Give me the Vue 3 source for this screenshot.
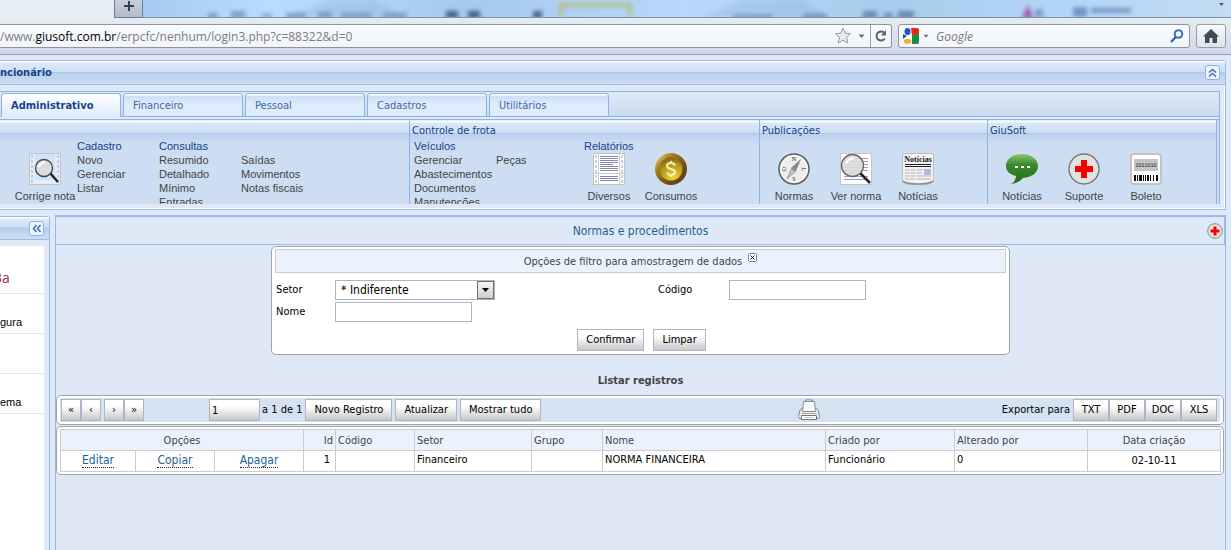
<script setup>
import { ref } from 'vue'

const tabs = ['Administrativo', 'Financeiro', 'Pessoal', 'Cadastros', 'Utilitários']
const active = ref('Administrativo')
const notas = [
  { head: 'Cadastro', items: ['Novo', 'Gerenciar', 'Listar'] },
  { head: 'Consultas', items: ['Resumido', 'Detalhado', 'Mínimo', 'Entradas'] },
  { head: '', items: ['Saídas', 'Movimentos', 'Notas fiscais'] },
]
const frota = [
  { head: 'Veículos', items: ['Gerenciar', 'Abastecimentos', 'Documentos', 'Manutenções'] },
  { head: '', items: ['Peças'] },
]
const cols = [75, 79, 89, 32, 79, 117, 71, 223, 129, 133, 133]
const exports = ['TXT', 'PDF', 'DOC', 'XLS']
const setor = ref('* Indiferente')
const nome = ref('')
const codigo = ref('')
const pagina = ref('1')
const perforations = [2, 7, 12, 17, 22, 27]
const bars = [[4, 2], [7, 1], [9, 3], [13, 1], [15, 1], [17, 2], [20, 1], [23, 1], [26, 2]]
</script>

<template>
  <div class="screen">
    <header class="browser">
      <div class="tabstrip">
        <div class="open-tab"></div>
        <button class="new-tab" aria-label="Nova aba">
          <svg width="12" height="12" viewBox="0 0 12 12"><path d="M6 1v10M1 6h10" stroke="#38424c" stroke-width="2" /></svg>
        </button>
        <div class="glass">
          <svg class="glass-art" height="17" width="1089" viewBox="0 0 1089 17" aria-hidden="true">
            <defs><filter id="soft"><feGaussianBlur stdDeviation="2" /></filter></defs>
            <g filter="url(#soft)">
              <path d="M140 17L190 0h40l35 17zM560 17L600 0h60l25 17z" fill="#8db0d6" opacity=".35" />
              <path d="M65 13h10v5H65zM88 11h14v7H88zM119 14h10v4h-10zM143 13h20v5h-20zM175 12h14v6h-14zM198 13h30v5h-30zM240 13h24v5h-24z" fill="#5c7fa9" opacity=".65" />
              <path d="M303 11h12v7h-12zM325 11h12v7h-12zM390 11h9v7h-9z" fill="#2f4767" opacity=".8" />
              <path d="M590 15h40v3h-40zM660 14h24v4h-24zM720 11h14v7h-14zM741 13h9v5h-9zM755 11h16v7h-16z" fill="#4d6c93" opacity=".7" />
              <path d="M418 17V5h69v12" fill="none" stroke="#b6bf8b" stroke-width="4" />
              <path d="M879 18l6-13 5 13z" fill="#9d57a4" />
              <path d="M892 9h8v9h-8z" fill="#6384c4" opacity=".7" />
              <path d="M930 7h14v10h-14zM948 8h40v5h-40z" fill="#4f74aa" opacity=".65" />
            </g>
          </svg>
          <svg class="tab-list" width="7" height="5" viewBox="0 0 7 5" aria-hidden="true"><path d="M1 1h5L3.500 4z" fill="#555f6a" /></svg>
        </div>
      </div>
      <div class="navbar">
        <div class="address">
          <span class="url">/www.<b>giusoft.com.br</b>/erpcfc/nenhum/login3.php?c=88322&amp;d=0</span>
          <button class="bare star" aria-label="Favoritos">
            <svg width="18" height="18" viewBox="0 0 18 18"><path d="M9 1.200l2.300 5 5.200.5-4 3.700 1.300 5.600L9 13.300 4.200 16l1.300-5.600-4-3.700 5.200-.5z" fill="#e9eaec" stroke="#96999e" /></svg>
            <svg width="7" height="5" viewBox="0 0 7 5"><path d="M.5.5h6L3.500 4z" fill="#6a6d72" /></svg>
          </button>
          <button class="bare reload" aria-label="Recarregar">
            <svg width="14" height="14" viewBox="0 0 14 14"><path d="M10.800 9.500A4.500 4.500 0 1 1 10 3.600" fill="none" stroke="#5e646b" stroke-width="2" /><path d="M12 1v5.500H6.800z" fill="#5e646b" /></svg>
          </button>
        </div>
        <div class="search">
          <svg width="16" height="16" viewBox="0 0 16 16" aria-hidden="true">
            <path d="M8 0h6a2 2 0 0 1 2 2v4L9 8z" fill="#e8261c" /><path d="M16 5v9a2 2 0 0 1-2 2H9V8z" fill="#12903b" /><path d="M0 6l6 2v7H0z" fill="#fff" />
            <ellipse cx="4.500" cy="3.500" rx="3" ry="3.500" fill="#1a56c4" /><path d="M0 6l4 2-4 3z" fill="#1a56c4" /><ellipse cx="4.500" cy="13.200" rx="3.700" ry="2.500" fill="#f2ae1c" />
          </svg>
          <svg width="6" height="5" viewBox="0 0 7 5" aria-hidden="true"><path d="M.5.5h6L3.500 4z" fill="#6a6d72" /></svg>
          <input type="text" placeholder="Google" aria-label="Pesquisar" />
          <svg width="14" height="14" viewBox="0 0 14 14" aria-hidden="true"><circle cx="8.500" cy="5" r="3.800" fill="none" stroke="#3275ae" stroke-width="2" /><path d="M5.800 8L1 13" stroke="#2f66a4" stroke-width="2.400" /></svg>
        </div>
        <button class="home" aria-label="Página inicial">
          <svg width="16" height="14" viewBox="0 0 16 14"><path d="M8 0l8 7.500h-2V14H9.500V9h-3v5H2V7.500H0z" fill="#424c57" /></svg>
        </button>
      </div>
    </header>

    <main class="page">
      <section class="menu">
        <div class="menu-head">
          <strong>ncionário</strong>
          <button class="tool" aria-label="Recolher menu">
            <svg width="9" height="9" viewBox="0 0 9 9"><path d="M1 4.500l3.500-3 3.500 3M1 8.500l3.500-3 3.500 3" fill="none" stroke="#3f74b5" stroke-width="1.600" /></svg>
          </button>
        </div>
        <div class="menu-box">
          <nav class="tabs">
            <button v-for="t in tabs" :key="t" class="tab" :class="{ on: t === active }" @click="active = t">{{ t }}</button>
          </nav>
          <div class="ribbon">
            <section class="group first">
              <h3></h3>
              <div class="row">
                <a href="#" class="tile">
                  <svg width="32" height="32" viewBox="0 0 32 32">
                    <rect x=".5" y=".5" width="31" height="31" fill="#e8edf4" stroke="#c3c3c3" /><rect x="6" y="1" width="20" height="26" fill="#cfe2fb" />
                    <path v-for="p in perforations" :key="p" :d="`M2 ${p}h2v3H2zM28 ${p}h2v3h-2z`" fill="#c4cbd4" />
                    <path d="M21 20l8 9" stroke="#222" stroke-width="2.500" /><circle cx="15" cy="15" r="8.500" fill="#dcdcdc" stroke="#444" stroke-width="1.300" /><path d="M10 14q1-4 6-5" fill="none" stroke="#fff" stroke-width="2" />
                  </svg><span>Corrige nota</span>
                </a>
                <div v-for="(c, i) in notas" :key="i" class="links">
                  <b>{{ c.head }}</b><a v-for="x in c.items" :key="x" href="#">{{ x }}</a>
                </div>
              </div>
            </section>
            <section class="group fleet">
              <h3>Controle de frota</h3>
              <div class="row">
                <div v-for="(c, i) in frota" :key="i" class="links">
                  <b>{{ c.head }}</b><a v-for="x in c.items" :key="x" href="#">{{ x }}</a>
                </div>
                <div class="reports">
                  <b>Relatórios</b>
                  <div class="tiles">
                    <a href="#" class="tile">
                      <svg width="32" height="32" viewBox="0 0 32 32">
                        <rect x=".5" y=".5" width="31" height="31" fill="#fff" stroke="#c3c3c3" /><path d="M5.500 1v30M26.500 1v30M1 20.500h30" stroke="#ccc" />
                        <path v-for="p in perforations" :key="p" :d="`M2 ${p}h2v3H2zM28 ${p}h2v3h-2z`" fill="#cfcfcf" />
                        <path d="M7 3.500h18M7 5.500h18M7 7.500h18M7 9.500h18M7 11.500h13M7 13.500h18M7 15.500h18M7 17.500h18M7 23.500h18M7 25.500h18M7 27.500h18" stroke="#8387b6" />
                      </svg><span>Diversos</span>
                    </a>
                    <a href="#" class="tile">
                      <svg width="32" height="32" viewBox="0 0 32 32">
                        <defs><radialGradient id="coin" cx=".6" cy=".85" r=".9"><stop offset="0" stop-color="#f0d92c" /><stop offset=".6" stop-color="#b39a20" /><stop offset="1" stop-color="#7c5a14" /></radialGradient>
                          <linearGradient id="rim" x1="0" y1="0" x2="1" y2="1"><stop offset="0" stop-color="#f3e58a" /><stop offset=".3" stop-color="#a4801c" /><stop offset=".7" stop-color="#6a4515" /></linearGradient></defs>
                        <circle cx="16" cy="16" r="16" fill="url(#rim)" /><circle cx="16" cy="16" r="11.500" fill="url(#coin)" />
                        <path d="M20 12.500Q19 10 16 10q-4 0-4 3 0 2 4 3t4 3q0 3-4 3-3 0-4-2.500M16 8v2M16 22v2" fill="none" stroke="#f8efbd" stroke-width="2" />
                      </svg><span>Consumos</span>
                    </a>
                  </div>
                </div>
              </div>
            </section>
            <section class="group">
              <h3>Publicações</h3>
              <div class="row icons">
                <a href="#" class="tile">
                  <svg width="32" height="32" viewBox="0 0 32 32">
                    <circle cx="16" cy="16" r="15" fill="#ededed" stroke="#5e5e5e" stroke-width="1.500" /><circle cx="16" cy="16" r="13" fill="none" stroke="#fff" />
                    <path d="M23 6L14 14l4 4z" fill="#888" /><path d="M9 26l5-12 4 4z" fill="#c4c4c4" stroke="#777" stroke-width=".6" /><circle cx="16" cy="16" r="2" fill="#8a8a8a" />
                    <text x="16" y="8" class="dial">N</text><text x="16" y="28" class="dial">S</text>
                    <text x="16" y="8" class="dial" transform="rotate(-90 16 16)">O</text><text x="16" y="8" class="dial" transform="rotate(90 16 16)">L</text>
                  </svg><span>Normas</span>
                </a>
                <a href="#" class="tile">
                  <svg width="32" height="32" viewBox="0 0 32 32">
                    <rect x=".5" y=".5" width="31" height="31" fill="#fff" stroke="#c6c6c6" /><path d="M4 5.500h24M4 8.500h24M4 11.500h24M4 14.500h24M4 17.500h24M4 20.500h18M4 23.500h24M4 26.500h24" stroke="#9a9bc2" />
                    <path d="M20 20l10 10" stroke="#222" stroke-width="2.600" /><circle cx="12.500" cy="12.500" r="11" fill="#dcdcdc" fill-opacity=".9" stroke="#666" stroke-width="1.300" /><path d="M6 11q1-5 8-6" fill="none" stroke="#fff" stroke-width="2" />
                  </svg><span>Ver norma</span>
                </a>
                <a href="#" class="tile">
                  <svg width="32" height="32" viewBox="0 0 32 32">
                    <path d="M.5.5h31v28q-2 3-7 3h-17q-5 0-7-3z" fill="#f2f2f2" stroke="#bdbdbd" /><path d="M1 28q3 3 15 3t15-3" fill="none" stroke="#888" stroke-width="1.500" />
                    <text x="16" y="9" class="paper">Notícias</text><path d="M3 11.500h26M3 13.500h26" stroke="#222" />
                    <path d="M3 17h17M3 20h17M3 23h26M3 26h26" stroke="#d2d2d2" stroke-width="2" /><path d="M8 15v13M14 15v13" stroke="#f2f2f2" /><rect x="22" y="16" width="7" height="6" fill="#afbde1" />
                  </svg><span>Notícias</span>
                </a>
              </div>
            </section>
            <section class="group last">
              <h3>GiuSoft</h3>
              <div class="row icons">
                <a href="#" class="tile">
                  <svg width="32" height="32" viewBox="0 0 32 32">
                    <defs><linearGradient id="talk" x1="0" y1="0" x2="0" y2="1"><stop offset="0" stop-color="#8cc56e" /><stop offset=".35" stop-color="#3c8a2c" /><stop offset="1" stop-color="#256a1a" /></linearGradient></defs>
                    <path d="M16 1c9 0 16 5 16 12 0 7-6 11-15 12q-4 5-12 6 5-3 5-8C3 21 0 18 0 13 0 6 7 1 16 1z" fill="url(#talk)" /><path d="M9 13h3v2H9zM15 13h3v2h-3zM21 13h3v2h-3z" fill="#fff" />
                  </svg><span>Notícias</span>
                </a>
                <a href="#" class="tile">
                  <svg width="32" height="32" viewBox="0 0 32 32"><circle cx="16" cy="16" r="15" fill="#e2e2e2" stroke="#777" stroke-width="1.400" /><path d="M13 7h6v6h6v6h-6v6h-6v-6H7v-6h6z" fill="#f80000" /></svg><span>Suporte</span>
                </a>
                <a href="#" class="tile">
                  <svg width="32" height="32" viewBox="0 0 32 32">
                    <rect x="1" y="1" width="30" height="30" rx="3" fill="#fff" stroke="#c4c4c4" stroke-width="2" /><rect x="4" y="6" width="24" height="12" fill="#c4c4c4" /><text x="16" y="14" class="digits">1011010</text>
                    <path v-for="b in bars" :key="b[0]" :d="`M${b[0]} 22h${b[1]}v6h-${b[1]}z`" fill="#111" />
                  </svg><span>Boleto</span>
                </a>
              </div>
            </section>
          </div>
        </div>
      </section>

      <div class="body">
        <aside class="side">
          <div class="side-head">
            <button class="tool" aria-label="Recolher painel">
              <svg width="9" height="9" viewBox="0 0 9 9"><path d="M4.500 1l-3 3.500 3 3.500M8.500 1l-3 3.500 3 3.500" fill="none" stroke="#3f74b5" stroke-width="1.600" /></svg>
            </button>
          </div>
          <ul>
            <li class="brand"><span>3a</span></li><li>gura</li><li></li><li>ema</li>
          </ul>
        </aside>

        <section class="content">
          <div class="title">
            <h1>Normas e procedimentos</h1>
            <button class="bare help" aria-label="Suporte">
              <svg width="16" height="16" viewBox="0 0 16 16"><circle cx="8" cy="8" r="7.300" fill="#e4e4e4" stroke="#8b8b8b" /><path d="M6.500 3.500h3v3h3v3h-3v3h-3v-3h-3v-3h3z" fill="#f80000" /></svg>
            </button>
          </div>

          <form class="filter" @submit.prevent>
            <div class="filter-title">
              <span>Opções de filtro para amostragem de dados</span>
              <button type="button" class="bare close" aria-label="Fechar filtro">
                <svg width="9" height="9" viewBox="0 0 9 9"><rect x=".5" y=".5" width="8" height="8" rx="1" fill="#fff" stroke="#6c8796" /><path d="M2.500 2.500l4 4M6.500 2.500l-4 4" stroke="#222" /></svg>
              </button>
            </div>
            <div class="fields">
              <label for="setor">Setor</label>
              <div class="pick">
                <select id="setor" v-model="setor"><option>* Indiferente</option></select>
                <span class="arrow"><svg width="7" height="4" viewBox="0 0 7 4" aria-hidden="true"><path d="M0 0h7L3.500 4z" fill="#000" /></svg></span>
              </div>
              <label for="codigo">Código</label>
              <input id="codigo" v-model="codigo" type="text" />
              <label for="nome">Nome</label>
              <input id="nome" v-model="nome" type="text" />
            </div>
            <div class="actions">
              <button class="btn">Confirmar</button>
              <button class="btn" type="reset">Limpar</button>
            </div>
          </form>

          <h2>Listar registros</h2>

          <div class="frame">
            <div class="bar">
              <div class="pair"><button class="btn sq">«</button><button class="btn sq">‹</button></div>
              <div class="pair"><button class="btn sq">›</button><button class="btn sq">»</button></div>
              <div class="pager">
                <input id="pagina" v-model="pagina" type="text" /><label for="pagina">a 1 de 1</label>
              </div>
              <button class="btn">Novo Registro</button>
              <button class="btn">Atualizar</button>
              <button class="btn">Mostrar tudo</button>
              <span class="before-print"></span>
              <button class="bare" aria-label="Imprimir">
                <svg width="22" height="22" viewBox="0 0 22 22">
                  <path d="M7 2q4-3 8 0" fill="none" stroke="#78b2e0" stroke-width="1.500" /><path d="M3.500 9.500h15q2 1 3 8l-1 2h-19l-1-2q1-7 3-8z" fill="#eee" stroke="#858585" />
                  <path d="M4.500 12.500L5.500 2.500h11l1 10z" fill="#f8f8f6" stroke="#8c8c8c" /><path d="M3.500 14.500h15" stroke="#aaa" /><path d="M3.500 16.500h15v4h-15z" fill="#fff" stroke="#777" /><path d="M6 18.500h10" stroke="#ccc" />
                </svg>
              </button>
              <span class="after-print"></span>
              <span>Exportar para</span>
              <div class="pair"><button v-for="e in exports" :key="e" class="btn exp">{{ e }}</button></div>
            </div>
          </div>

          <div class="frame">
            <table>
              <colgroup><col v-for="(w, i) in cols" :key="i" :style="{ width: w + 'px' }" /></colgroup>
              <thead>
                <tr><th colspan="3" class="mid">Opções</th><th class="num">Id</th><th>Código</th><th>Setor</th><th>Grupo</th><th>Nome</th><th>Criado por</th><th>Alterado por</th><th class="mid">Data criação</th></tr>
              </thead>
              <tbody>
                <tr>
                  <td class="mid"><a href="#">Editar</a></td><td class="mid"><a href="#">Copiar</a></td><td class="mid"><a href="#">Apagar</a></td>
                  <td class="num id">1</td><td></td><td>Financeiro</td><td></td><td>NORMA FINANCEIRA</td><td>Funcionário</td><td>0</td><td class="mid">02-10-11</td>
                </tr>
              </tbody>
            </table>
          </div>
        </section>
      </div>
    </main>
  </div>
</template>

<style>
body { margin: 0; background: #dfe8f6; overflow: hidden; }
</style>

<style scoped>
.screen { min-height: 100vh; display: flex; flex-direction: column; font: 11px/14px "DejaVu Sans Condensed", "DejaVu Sans", sans-serif; color: #000; background: #dfe8f6; }
.screen * { box-sizing: border-box; }
button, input, select { font: inherit; color: inherit; margin: 0; padding: 0; border-radius: 0; }
h1, h2, h3, ul { margin: 0; padding: 0; font: inherit; list-style: none; }
a { color: inherit; text-decoration: none; }
svg { display: block; flex: none; }
.bare { border: 0; background: none; display: flex; align-items: center; }

.tabstrip { display: flex; height: 18px; background: #e3eaf3; }
.open-tab { width: 114px; background: #e6edf5; }
.new-tab { width: 29px; border: 1px solid #6b7f97; border-top: 0; background: linear-gradient(#c6cfda, #b2bdcb); display: flex; align-items: flex-start; justify-content: center; }
.glass { flex: 1; position: relative; overflow: hidden; border-bottom: 1px solid #7b90a9; background: linear-gradient(90deg, #a6cbf0, #b9dbff 12%, #a5c9ee 30%, #b7d8fa 50%, #a9cbec 68%, #b3d6f8 85%, #c3dbf3); }
.glass-art { position: absolute; left: 0; top: 0; }
.tab-list { position: absolute; right: 6px; top: 2px; }
.navbar { display: flex; align-items: center; gap: 6px; height: 37px; padding: 0 5px 0 0; background: linear-gradient(#e5ecf3, #ced8e8); border-bottom: 1px solid #9a9ea6; font: 12px/16px "Open Sans", "Noto Sans", sans-serif; }
.address, .search { display: flex; align-items: center; height: 24px; border: 1px solid #8d949d; background: linear-gradient(#fafbfe, #f1f4f9); }
.address { flex: 1; border-left: 0; border-radius: 0 3px 3px 0; color: #7d7d7d; }
.address b { color: #000; font-weight: 400; }
.url { flex: 1; white-space: nowrap; padding-top: 2px; }
.star { gap: 6px; padding-right: 5px; }
.reload { width: 21px; height: 22px; justify-content: center; border-left: 1px solid #9ba1a8; }
.search { width: 292px; padding: 0 5px 0 4px; gap: 4px; border-radius: 3px; }
.search input { flex: 1; min-width: 0; border: 0; background: none; font-style: italic; padding: 1px 0 0 3px; outline: 0; }
.search input::placeholder { color: #777; opacity: 1; }
.home { width: 30px; height: 24px; display: flex; align-items: center; justify-content: center; border: 1px solid #989da5; border-radius: 3px; background: linear-gradient(#f8fafc, #dde3ec); }

.page { flex: 1; display: flex; flex-direction: column; padding: 5px 5px 0 0; }
.menu { border: solid #99bbe8; border-width: 1px 1px 1px 0; border-radius: 0 3px 0 0; box-shadow: inset -1px -1px #fff; }
.menu-head { display: flex; align-items: center; height: 24px; padding-right: 5px; color: #15428b; border-bottom: 1px solid #99bbe8; background: linear-gradient(#fff 1px, #dde9f8 2px, #cfe0f4 11px, #a9c7ef 11px, #a9c7ef 12px, #b9cfee 12px, #cddef3 23px); }
.menu-head strong { flex: 1; padding-top: 1px; }
.tool { width: 15px; height: 15px; display: flex; align-items: center; justify-content: center; border: 1px solid #8fb2e4; border-radius: 3px; background: #eef5ff; }
.menu-box { margin: 6px 5px 5px 0; border: solid #8db2e3; border-width: 1px 1px 0 0; }
.tabs { display: flex; gap: 2px; padding: 1px 0 0 1px; border-bottom: 1px solid #8db2e3; background: linear-gradient(#dee8f6, #ccdaf0); }
.tab { width: 120px; height: 24px; margin-bottom: -1px; padding: 1px 0 0 9px; text-align: left; color: #416aa3; border: 1px solid #8db2e3; border-radius: 3px 3px 0 0; background: linear-gradient(#fff 1px, #cddff5 2px, #deecfd 50%); }
.tab.on { color: #15428b; font-weight: 700; border-bottom-color: #deecfd; background: linear-gradient(#fff, #deecfd); }
.ribbon { display: grid; grid-template-columns: 409fr 350fr 228fr 230fr; max-height: 87px; overflow: hidden; padding: 2px 2px 0 0; background: linear-gradient(#deecfd 2px, #8db2e3 2px, #8db2e3 3px, #cddef3 3px); color: #444; font: 11px/14px "Liberation Sans", Arial, sans-serif; }
.group { min-width: 0; border-left: 1px solid #8db2e3; padding: 3px 2px 0; background: linear-gradient(#8db2e3 1px, #dbe7f6 1px, #fff 3px, #dbe7f6 4px, #cddff4 14px, #a9c7ef 14px, #a9c7ef 15px, #bad0ee 15px, #cddef3 26px); }
.group.first { border-left: 0; padding-left: 14px; }
.group.last { border-right: 1px solid #8db2e3; }
.group h3 { height: 17px; padding-top: 2px; color: #15428b; font: 11px/14px "DejaVu Sans Condensed", "DejaVu Sans", sans-serif; }
.fleet .row { padding-left: 2px; }
.icons { padding-left: 1px; }
.row, .tiles { display: flex; }
.links { width: 82px; flex: none; }
.links b, .reports b { display: block; height: 14px; font-weight: 400; color: #15428b; }
.links a { display: block; }
.tile { width: 62px; flex: none; display: flex; flex-direction: column; align-items: center; padding-top: 14px; white-space: nowrap; gap: 4px; }
.first .tile { margin-right: 1px; }
.tiles .tile { padding-top: 0; }
.reports b { padding-left: 6px; }
.dial { font: 6px "Liberation Serif", serif; text-anchor: middle; fill: #222; }
.paper { font: bold 8px "Liberation Serif", serif; text-anchor: middle; fill: #222; }
.digits { font: 5px "Liberation Mono", monospace; text-anchor: middle; fill: #222; }

.body { flex: 1; display: flex; gap: 5px; margin-top: 5px; }
.side { width: 50px; margin-top: 1px; border: solid #99bbe8; border-width: 1px 1px 0 0; border-radius: 0 3px 0 0; display: flex; flex-direction: column; }
.side-head { display: flex; align-items: center; justify-content: flex-end; height: 23px; padding-right: 5px; border-bottom: 1px solid #99bbe8; background: linear-gradient(#fff 1px, #dde9f8 2px, #cfe0f4 10px, #a9c7ef 11px, #b9cfee 12px, #cddef3); }
.side ul { flex: 1; margin: 6px 5px 0 0; background: #fff; }
.side li { height: 40px; display: flex; align-items: flex-end; padding-bottom: 4px; border-bottom: 1px solid #e8e8e8; font: 11px/14px "Liberation Sans", Arial, sans-serif; }
.side .brand { height: 48px; padding-bottom: 6px; color: #a32a2a; font: 14px/18px "Open Sans", sans-serif; }
.brand span { margin-left: -6px; }

.content { flex: 1; min-width: 0; border: solid #99bbe8; border-width: 2px 1px 0 1px; }
.title { display: flex; align-items: center; height: 28px; border-bottom: 1px solid #99bbe8; padding-right: 2px; box-shadow: inset -1px 0 #99bbe8; }
.title h1 { flex: 1; padding: 1px 0 0 18px; text-align: center; color: #1d6390; font-size: 12px; }
.filter { width: 63.200%; margin: 1px auto 0; padding: 2px 3px 3px; border: 1px solid #a3a3a3; border-radius: 5px; background: #fff; }
.filter-title { display: flex; justify-content: center; gap: 6px; height: 24px; padding-top: 3px; border: 1px solid #ccc; background: #eaf3fd; color: #444; }
.filter-title span { padding-top: 2px; }
.close { height: 9px; }
.fields { display: grid; grid-template-columns: 59fr 323fr 71fr 277fr; align-items: center; gap: 2px 0; padding: 7px 0 0 1px; }
.fields input { width: 137px; height: 20px; padding: 0 3px; border: 1px solid #b2b2c8; background: #fff; }
.pick { position: relative; width: 160px; height: 20px; }
.pick select { width: 100%; height: 100%; appearance: none; padding: 0 20px 0 5px; border: 1px solid #b2b2c8; background: #fff; font-size: 12px; }
.arrow { position: absolute; right: 1px; top: 1px; width: 17px; height: 18px; display: flex; align-items: center; justify-content: center; border: 1px solid #707070; background: linear-gradient(#f6f6f6, #cfcfcf); pointer-events: none; }
.actions { display: flex; justify-content: center; gap: 9px; padding: 7px 0 0 2px; }
.btn { height: 22px; padding: 0 8px; border: 1px solid #b2b2c8; background: linear-gradient(#fff 30%, #c8c8c8); white-space: nowrap; }
h2 { margin: 19px 0 7px; text-align: center; font-weight: 700; color: #444; }
.frame { margin: 0 1px 1px 0; padding: 2px 3px; border: 1px solid #a3a3a3; border-radius: 5px; background: #fff; }
.bar { display: flex; align-items: center; gap: 3px; padding: 1px 3px 1px 1px; background: #d5e2f2; }
.pair { display: flex; }
.sq { width: 20px; padding: 0; }
.pager { display: flex; align-items: center; gap: 2px; margin-left: 62px; white-space: nowrap; }
.pager input { width: 51px; height: 22px; padding: 0 2px; border: 1px solid #b2b2c8; background: linear-gradient(#fff 30%, #c8c8c8); }
.before-print { flex: 10; }
.after-print { flex: 7; }
.exp { width: 36px; padding: 0; }
table { width: 100%; table-layout: fixed; border-collapse: collapse; }
th, td { height: 21px; padding: 1px 2px 0; border: 1px solid #ccc; text-align: left; font-weight: 400; white-space: nowrap; }
th { background: #eaf3fd; color: #444; padding-top: 2px; }
td { padding: 0 2px 3px; }
.mid { text-align: center; }
.num { text-align: right; }
.id { padding-right: 5px; }
td a { display: inline-block; color: #1d6390; font-size: 12px; line-height: 14px; border-bottom: 1px dotted #222; vertical-align: bottom; }
td.mid { padding-bottom: 1px; }
</style>
